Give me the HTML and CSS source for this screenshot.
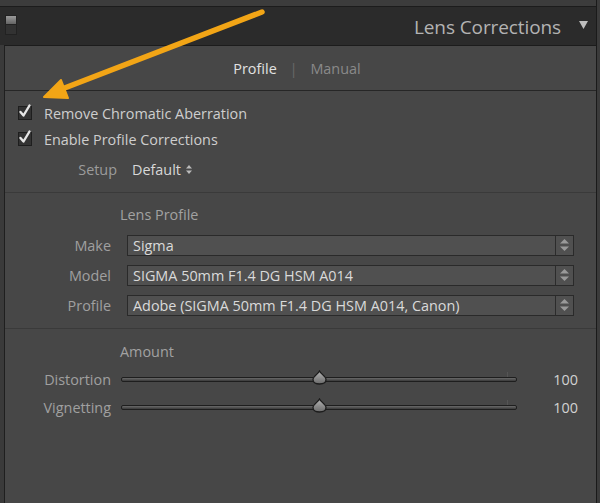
FILE: index.html
```html
<!DOCTYPE html>
<html>
<head>
<meta charset="utf-8">
<link rel="stylesheet" href="styles.css">
</head>
<body>
<div class="frame">
  <div class="col">
    <div class="topstrip"></div>
    <div class="header">
      <div class="toggle"><span class="t1"></span><span class="t2"></span></div>
      <div class="title">Lens Corrections</div>
      <svg class="tri" width="9" height="8" viewBox="0 0 9 8"><polygon points="0,0 9,0 4.5,8" fill="#bdbdbd"/></svg>
    </div>
    <div class="panel">
      <div class="tabs">
        <span class="tab active">Profile</span>
        <span class="sep">|</span>
        <span class="tab">Manual</span>
      </div>
      <div class="section checks">
        <div class="check">
          <span class="box"><svg width="14" height="16" viewBox="0 0 14 16"><path d="M2.5 9 L5.5 12.5 L11.5 2.5" fill="none" stroke="#e6e6e6" stroke-width="2.4" stroke-linecap="round" stroke-linejoin="round"/></svg></span>
          <span class="ctext">Remove Chromatic Aberration</span>
        </div>
        <div class="check">
          <span class="box"><svg width="14" height="16" viewBox="0 0 14 16"><path d="M2.5 9 L5.5 12.5 L11.5 2.5" fill="none" stroke="#e6e6e6" stroke-width="2.4" stroke-linecap="round" stroke-linejoin="round"/></svg></span>
          <span class="ctext">Enable Profile Corrections</span>
        </div>
        <div class="setup">
          <span class="slbl">Setup</span>
          <span class="sval">Default <svg width="6" height="9" viewBox="0 0 6 9"><polygon points="3,0 6,3.5 0,3.5" fill="#bbb"/><polygon points="0,5.5 6,5.5 3,9" fill="#bbb"/></svg></span>
        </div>
      </div>
      <div class="section profile">
        <div class="subhead">Lens Profile</div>
        <div class="row">
          <span class="lbl">Make</span>
          <div class="select"><span class="stext">Sigma</span><span class="step"><svg width="9" height="12" viewBox="0 0 9 12"><polygon points="4.5,0 9,4.5 0,4.5" fill="#9a9a9a"/><polygon points="0,7.5 9,7.5 4.5,12" fill="#9a9a9a"/></svg></span></div>
        </div>
        <div class="row">
          <span class="lbl">Model</span>
          <div class="select"><span class="stext">SIGMA 50mm F1.4 DG HSM A014</span><span class="step"><svg width="9" height="12" viewBox="0 0 9 12"><polygon points="4.5,0 9,4.5 0,4.5" fill="#9a9a9a"/><polygon points="0,7.5 9,7.5 4.5,12" fill="#9a9a9a"/></svg></span></div>
        </div>
        <div class="row">
          <span class="lbl">Profile</span>
          <div class="select"><span class="stext">Adobe (SIGMA 50mm F1.4 DG HSM A014, Canon)</span><span class="step"><svg width="9" height="12" viewBox="0 0 9 12"><polygon points="4.5,0 9,4.5 0,4.5" fill="#9a9a9a"/><polygon points="0,7.5 9,7.5 4.5,12" fill="#9a9a9a"/></svg></span></div>
        </div>
      </div>
      <div class="section amount">
        <div class="subhead">Amount</div>
        <div class="srow">
          <span class="lbl">Distortion</span>
          <div class="track"><span class="tick"></span><span class="thumb" style="left:50%"><svg width="15" height="15" viewBox="0 0 15 15"><defs><linearGradient id="g1" x1="0" y1="0" x2="0" y2="1"><stop offset="0" stop-color="#b5b5b5"/><stop offset="1" stop-color="#6a6a6a"/></linearGradient></defs><path d="M7.5 1 C9 4 14 6.5 14 9.5 C14 12.5 11 14 7.5 14 C4 14 1 12.5 1 9.5 C1 6.5 6 4 7.5 1 Z" fill="url(#g1)" stroke="#1c1c1c" stroke-width="1.3"/></svg></span></div>
          <span class="num">100</span>
        </div>
        <div class="srow">
          <span class="lbl">Vignetting</span>
          <div class="track"><span class="tick"></span><span class="thumb" style="left:50%"><svg width="15" height="15" viewBox="0 0 15 15"><path d="M7.5 1 C9 4 14 6.5 14 9.5 C14 12.5 11 14 7.5 14 C4 14 1 12.5 1 9.5 C1 6.5 6 4 7.5 1 Z" fill="url(#g1)" stroke="#1c1c1c" stroke-width="1.3"/></svg></span></div>
          <span class="num">100</span>
        </div>
      </div>
    </div>
  </div>
  <div class="edge"></div>
</div>
<svg class="annot" width="600" height="503" viewBox="0 0 600 503">
  <line x1="262" y1="12" x2="62" y2="89" stroke="#f2a516" stroke-width="5.5" stroke-linecap="round"/>
  <polygon points="44,97 61,80 68,98" fill="#f2a516" stroke="#f2a516" stroke-width="2" stroke-linejoin="round"/>
</svg>
</body>
</html>
```
FILE: styles.css
```css
* { box-sizing: border-box; }
html, body { margin: 0; padding: 0; }
body {
  width: 600px;
  height: 503px;
  overflow: hidden;
  background: #3a3a3a;
  font-family: "Open Sans", "Noto Sans", sans-serif;
  position: relative;
}
.frame {
  display: flex;
  height: 503px;
}
.col {
  width: 596px;
  display: flex;
  flex-direction: column;
}
.edge {
  flex: 1;
  border-left: 1px solid #1a1a1a;
  background: #3b3b3b;
}
.topstrip {
  height: 7px;
  background: #3c3c3c;
  border-bottom: 1px solid #1c1c1c;
}
.header {
  height: 38px;
  background: #2b2b2b;
  display: flex;
  align-items: center;
  padding-left: 5px;
  padding-right: 8px;
}
.toggle {
  display: flex;
  flex-direction: column;
  width: 12px;
  align-self: flex-start;
  margin-top: 8px;
}
.toggle .t1 {
  height: 10px;
  background: linear-gradient(#9a9a9a, #646464);
  border: 1px solid #222;
}
.toggle .t2 {
  height: 10px;
  background: #323232;
  border: 1px solid #222;
  border-top: none;
}
.title {
  flex: 1;
  text-align: right;
  color: #b3b3b3;
  font-size: 19px;
  letter-spacing: -0.1px;
  padding-right: 18px;
  padding-top: 2px;
}
.tri { margin-top: -2px; }
.panel {
  flex: 1;
  margin-left: 4px;
  border-left: 1px solid #1f1f1f;
  border-top: 1px solid #1c1c1c;
  background: #474747;
  display: flex;
  flex-direction: column;
}
.tabs {
  height: 45px;
  border-bottom: 1px solid #262626;
  display: flex;
  justify-content: center;
  align-items: center;
  gap: 13px;
  font-size: 14.4px;
  padding-right: 7px;
}
.tab { color: #8a8a8a; }
.tab.active { color: #e2e2e2; }
.sep { color: #6a6a6a; font-size: 14px; }
.section { display: flex; flex-direction: column; }
.checks {
  padding-top: 9px;
  padding-bottom: 10px;
  border-bottom: 1px solid #3a3a3a;
}
.check {
  height: 26px;
  display: flex;
  align-items: center;
  padding-left: 13px;
  gap: 12px;
}
.box {
  width: 14px;
  height: 14px;
  background: #333;
  border: 1px solid #1e1e1e;
  position: relative;
}
.box svg { position: absolute; left: -1px; top: -4px; }
.ctext { color: #cecece; font-size: 14.4px; }
.setup {
  margin-top: 4px;
  height: 26px;
  display: flex;
  align-items: center;
  gap: 15px;
}
.slbl {
  width: 112px;
  text-align: right;
  color: #9c9c9c;
  font-size: 14.4px;
}
.sval {
  color: #d8d8d8;
  font-size: 14.4px;
  display: flex;
  align-items: center;
  gap: 5px;
}
.profile {
  padding-top: 12px;
  padding-bottom: 13px;
  border-bottom: 1px solid #3a3a3a;
}
.subhead {
  height: 20px;
  line-height: 20px;
  padding-left: 115px;
  color: #a2a2a2;
  font-size: 14.4px;
}
.row {
  margin-top: 10px;
  height: 20px;
  display: flex;
  align-items: center;
  gap: 16px;
}
.lbl {
  width: 106px;
  flex: none;
  text-align: right;
  color: #a0a0a0;
  font-size: 14.4px;
}
.select {
  width: 447px;
  height: 21px;
  background: #505050;
  border: 1px solid #2a2a2a;
  display: flex;
  align-items: center;
}
.stext {
  flex: 1;
  color: #dadada;
  font-size: 14.4px;
  padding-left: 5px;
  white-space: nowrap;
}
.step {
  width: 18px;
  height: 100%;
  border-left: 1px solid #2c2c2c;
  display: flex;
  align-items: center;
  justify-content: center;
}
.amount { padding-top: 13px; }
.srow {
  margin-top: 7px;
  height: 20px;
  display: flex;
  align-items: center;
  gap: 10px;
}
.srow + .srow { margin-top: 8px; }
.track {
  width: 396px;
  height: 5px;
  background: linear-gradient(#6a6a6a, #3a3a3a);
  border: 1px solid #1e1e1e;
  border-radius: 2px;
  position: relative;
}
.tick {
  position: absolute;
  right: 8px;
  top: -6px;
  width: 1px;
  height: 5px;
  background: #555;
}
.thumb {
  position: absolute;
  top: -8px;
  width: 15px;
  height: 15px;
  margin-left: -7px;
}
.thumb svg { display: block; }
.num {
  width: 51px;
  text-align: right;
  color: #d2d2d2;
  font-size: 14.4px;
}
.annot {
  position: absolute;
  left: 0;
  top: 0;
  pointer-events: none;
}
```
